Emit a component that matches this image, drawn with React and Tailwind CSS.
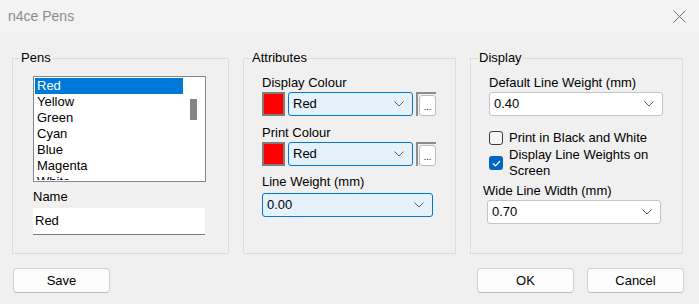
import React from "react";

const font = { fontFamily: '"Liberation Sans", Arial, sans-serif' };

function Chevron() {
  return (
    <svg width="10" height="6" viewBox="0 0 10 6" className="shrink-0">
      <path d="M0.5 0.5 L5 5 L9.5 0.5" fill="none" stroke="#5f5f5f" strokeWidth="1" />
    </svg>
  );
}

function Combo({ value, active, className = "" }) {
  return (
    <div
      className={`h-[24px] flex items-center justify-between pl-[4px] pr-[8px] rounded-[3px] border ${
        active ? "bg-[#e5f1fb] border-[#0078d7]" : "bg-white border-[#c4c4c4]"
      } ${className}`}
    >
      <span className="text-[13px] text-black">{value}</span>
      <Chevron />
    </div>
  );
}

function Swatch() {
  return <div className="w-[23px] h-[24px] bg-[#ff0000] border-2 border-[#7d7d7d] shrink-0"></div>;
}

function DotsBtn() {
  return (
    <div className="w-[20px] h-[24px] border-l-2 border-t-2 border-[#8c8c8c] bg-[#f0f0f0] flex items-end justify-end shrink-0">
      <div className="w-[17px] h-[21px] bg-white border border-[#bdbdbd] rounded-[3px] flex items-end justify-center pb-[3px] text-[9px] leading-none text-black">
        ...
      </div>
    </div>
  );
}

function Group({ title, className = "", children }) {
  return (
    <fieldset className={`border border-[#dcdcdc] h-[204px] p-0 ${className}`}>
      <legend className="ml-[7px] px-[1px] text-[13px] leading-[16px] text-black">{title}</legend>
      {children}
    </fieldset>
  );
}

function Check({ checked }) {
  return checked ? (
    <div className="w-[14px] h-[14px] rounded-[3px] bg-[#0067c0] flex items-center justify-center shrink-0">
      <svg width="9" height="7" viewBox="0 0 9 7">
        <path d="M1 3.5 L3.5 6 L8 1" fill="none" stroke="white" strokeWidth="1.2" />
      </svg>
    </div>
  ) : (
    <div className="w-[14px] h-[14px] rounded-[3px] border border-[#3a3a3a] bg-[#f6f6f6] shrink-0"></div>
  );
}

function Button({ children, className = "" }) {
  return (
    <div
      className={`w-[97px] h-[25px] rounded-[4px] bg-[#fdfdfd] border border-[#d0d0d0] border-b-[#bcbcbc] flex items-center justify-center text-[13px] text-black ${className}`}
    >
      {children}
    </div>
  );
}

export default function App() {
  const pens = ["Red", "Yellow", "Green", "Cyan", "Blue", "Magenta", "White"];

  return (
    <div className="w-[699px] h-[304px] bg-[#f0f0f0] flex flex-col overflow-hidden" style={font}>
      {/* title bar */}
      <div className="h-[33px] bg-[#f3f3f3] flex items-center justify-between pl-[8px] pr-[13px]">
        <span className="text-[14px] text-[#8b8b8b]">n4ce Pens</span>
        <svg width="13" height="13" viewBox="0 0 13 13">
          <path d="M0.5 0.5 L12.5 12.5 M12.5 0.5 L0.5 12.5" stroke="#6b6b6b" strokeWidth="1" />
        </svg>
      </div>

      <div className="flex pl-[12px] pt-[17px] gap-[14px]">
        {/* Pens */}
        <Group title="Pens" className="w-[217px]">
          <div className="px-[20px]">
            <div className="mt-[10px] w-[173px] h-[106px] border border-[#828790] bg-white flex p-[1px]">
              <div className="flex-1 overflow-hidden flex flex-col">
                {pens.map((p, i) => (
                  <div
                    key={p}
                    className={`h-[16px] shrink-0 flex items-center pl-[2px] text-[13px] ${
                      i === 0 ? "bg-[#0078d7] text-white" : "text-black"
                    }`}
                  >
                    {p}
                  </div>
                ))}
              </div>
              <div className="w-[21px] flex justify-center pt-[21px]">
                <div className="w-[7px] h-[21px] bg-[#858585]"></div>
              </div>
            </div>
            <div className="mt-[7px] text-[13px] leading-[16px] text-black">Name</div>
            <div className="mt-[3px] w-[172px] h-[27px] bg-white border-b border-[#7a7a7a] flex items-center pl-[2px] text-[13px] text-black">
              Red
            </div>
          </div>
        </Group>

        {/* Attributes */}
        <Group title="Attributes" className="w-[213px]">
          <div className="pl-[18px]">
            <div className="mt-[9px] text-[13px] leading-[16px] text-black">Display Colour</div>
            <div className="mt-[1px] flex items-center gap-[3px]">
              <Swatch />
              <Combo value="Red" active className="w-[125px]" />
              <DotsBtn />
            </div>
            <div className="mt-[9px] text-[13px] leading-[16px] text-black">Print Colour</div>
            <div className="mt-[1px] flex items-center gap-[3px]">
              <Swatch />
              <Combo value="Red" active className="w-[125px]" />
              <DotsBtn />
            </div>
            <div className="mt-[8px] text-[13px] leading-[16px] text-black">Line Weight (mm)</div>
            <Combo value="0.00" active className="mt-[3px] w-[171px]" />
          </div>
        </Group>

        {/* Display */}
        <Group title="Display" className="w-[213px]">
          <div className="pl-[18px]">
            <div className="mt-[9px] text-[13px] leading-[16px] text-black">Default Line Weight (mm)</div>
            <Combo value="0.40" className="mt-[1px] w-[174px]" />
            <div className="mt-[14px] flex items-center gap-[6px] h-[16px]">
              <Check />
              <span className="text-[13px] text-black">Print in Black and White</span>
            </div>
            <div className="mt-[1px] flex items-center gap-[6px]">
              <Check checked />
              <span className="text-[13px] leading-[16px] text-black">
                Display Line Weights on
                <br />
                Screen
              </span>
            </div>
            <div className="mt-[4px] -ml-[6px] text-[13px] leading-[16px] text-black">Wide Line Width (mm)</div>
            <Combo value="0.70" className="mt-[1px] -ml-[2px] w-[174px]" />
          </div>
        </Group>
      </div>

      <div className="flex pl-[13px] pt-[14px]">
        <Button>Save</Button>
        <div className="flex-1"></div>
        <Button className="mr-[13px]">OK</Button>
        <Button className="mr-[15px]">Cancel</Button>
      </div>
    </div>
  );
}
